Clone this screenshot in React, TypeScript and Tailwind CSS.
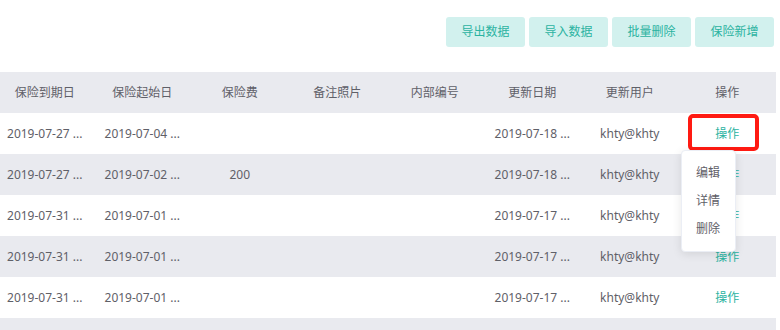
import React from 'react'

const columns = ['保险到期日', '保险起始日', '保险费', '备注照片', '内部编号', '更新日期', '更新用户', '操作']

const rows = [
    { end: '2019-07-27 ...', start: '2019-07-04 ...', fee: '', updated: '2019-07-18 ...' },
    { end: '2019-07-27 ...', start: '2019-07-02 ...', fee: '200', updated: '2019-07-18 ...' },
    { end: '2019-07-31 ...', start: '2019-07-01 ...', fee: '', updated: '2019-07-17 ...' },
    { end: '2019-07-31 ...', start: '2019-07-01 ...', fee: '', updated: '2019-07-17 ...' },
    { end: '2019-07-31 ...', start: '2019-07-01 ...', fee: '', updated: '2019-07-17 ...' },
    { end: '', start: '', fee: '', updated: '' },
]

const toolbar = ['导出数据', '导入数据', '批量删除', '保险新增']

export default function App() {
    return (
        <div className="w-[780px] h-[330px] overflow-hidden bg-white text-[12px] text-[#5f6068] font-['Noto_Sans','Noto_Sans_CJK_SC',sans-serif]">
            {/* Toolbar */}
            <div className="flex justify-end gap-1 pt-[17px] pr-[6px] h-[72px]">
                {toolbar.map((label) => (
                    <button
                        key={label}
                        className="w-[79px] h-[30px] rounded-[3px] bg-[#d2f1ee] text-[#2bb3a1] text-[12px]"
                    >
                        {label}
                    </button>
                ))}
            </div>

            {/* Table */}
            <div className="-ml-1 w-[780px]">
                <div className="grid grid-cols-8 h-[41px] bg-[#e9eaef] items-center text-center">
                    {columns.map((c) => (
                        <div key={c}>{c}</div>
                    ))}
                </div>

                {rows.map((row, i) => (
                    <div
                        key={i}
                        className={`grid grid-cols-8 h-[41px] items-center text-center ${i % 2 === 1 ? 'bg-[#e9eaef]' : 'bg-white'}`}
                    >
                        <div className="whitespace-nowrap">{row.end}</div>
                        <div className="whitespace-nowrap">{row.start}</div>
                        <div>{row.fee}</div>
                        <div></div>
                        <div></div>
                        <div className="whitespace-nowrap">{row.updated}</div>
                        <div>{row.end ? 'khty@khty' : ''}</div>
                        <div className="relative h-full flex items-center justify-center">
                            {row.end && <span className="text-[#2bb3a1]">操作</span>}
                            {i === 0 && (
                                <>
                                    <div className="absolute left-[9px] top-[1px] w-[71px] h-[37px] border-4 border-[#ff1a12] rounded-[5px]" />
                                    <div className="absolute z-10 left-[2px] top-[37px] w-[55px] py-2 bg-white border border-[#ebeef5] rounded-[4px] shadow-[0_2px_10px_rgba(0,0,0,0.1)]">
                                        {['编辑', '详情', '删除'].map((m) => (
                                            <div key={m} className="h-7 flex items-center justify-center text-[#5f6068]">
                                                {m}
                                            </div>
                                        ))}
                                    </div>
                                </>
                            )}
                        </div>
                    </div>
                ))}
            </div>
        </div>
    )
}
